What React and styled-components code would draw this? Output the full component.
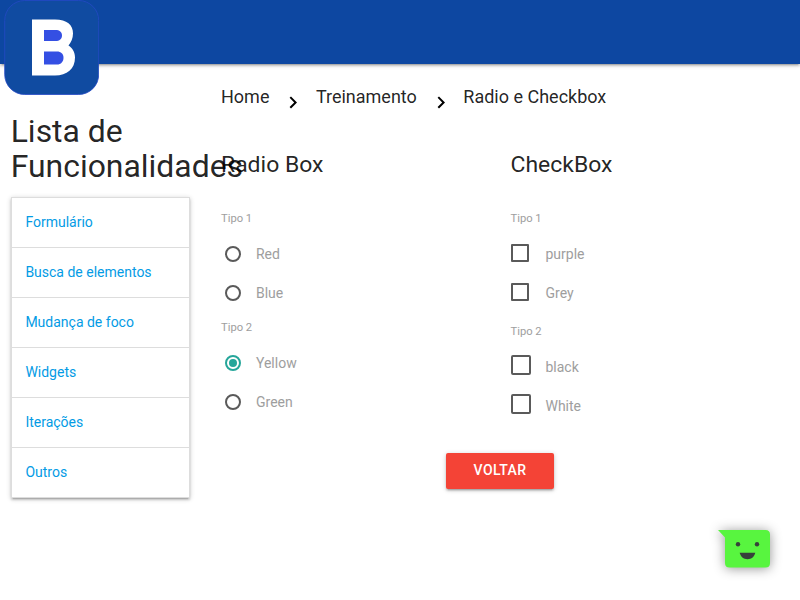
import React from "react";
import styled, { createGlobalStyle } from "styled-components";

const GlobalStyle = createGlobalStyle`
  *, *::before, *::after { box-sizing: border-box; }
  html { font-size: 14px; }
  body {
    margin: 0;
    background: #fff;
    color: rgba(0, 0, 0, 0.87);
    font-family: Roboto, "Liberation Sans", sans-serif;
    line-height: 1.5;
  }
`;

const Page = styled.div`
  position: relative;
  min-height: 600px;
  overflow: hidden;
`;

const NavBar = styled.nav`
  height: 64px;
  background: #0d47a1;
  box-shadow: 0 2px 2px 0 rgba(0, 0, 0, 0.14), 0 3px 1px -2px rgba(0, 0, 0, 0.12),
    0 1px 5px 0 rgba(0, 0, 0, 0.2);
`;

const Logo = styled.svg`
  position: absolute;
  left: 4px;
  top: 0;
`;

const Layout = styled.div`
  display: grid;
  grid-template-columns: 179px 1fr;
  column-gap: 31.3px;
  padding-left: 10.7px;
`;

const Sidebar = styled.aside`
  padding-top: 50px;
`;

const SidebarTitle = styled.h4`
  margin: 0 0 13px;
  font-size: 2.28rem;
  font-weight: 400;
  line-height: 110%;
  height: 70px;
`;

const Collection = styled.nav`
  border: 1px solid #ddd;
  border-bottom: 0;
  box-shadow: 0 2px 2px 0 rgba(0, 0, 0, 0.14), 0 3px 1px -2px rgba(0, 0, 0, 0.12),
    0 1px 5px 0 rgba(0, 0, 0, 0.2);
`;

const CollectionLink = styled.a`
  display: flex;
  align-items: center;
  height: 50px;
  padding: 0 13.7px;
  border-bottom: 1px solid #ddd;
  color: #039be5;
  text-decoration: none;
`;

const Content = styled.main`
  padding-top: 19px;
`;

const Breadcrumbs = styled.div`
  display: flex;
  height: 28px;
  font-size: 18px;
  line-height: 28px;
`;

const Chevron = styled.svg`
  width: 24px;
  height: 24px;
  margin: 7px 10.7px 0 11.8px;
  flex: none;
`;

const Columns = styled.div`
  display: grid;
  grid-template-columns: 289.5px 1fr;
  margin-top: 41px;
`;

const ColumnTitle = styled.h5`
  margin: 0 0 32px;
  font-size: 1.64rem;
  font-weight: 400;
  line-height: 26px;
`;

const Group = styled.div`
  padding-bottom: ${(p) => p.$gap || 0}px;
  color: #9e9e9e;
`;

const GroupLabel = styled.div`
  height: 18px;
  font-size: 0.8rem;
  line-height: 18px;
  margin-bottom: 7px;
`;

const Option = styled.label`
  display: flex;
  align-items: center;
  height: 39px;
`;

const ControlSlot = styled.span`
  display: flex;
  width: 35px;
  padding-left: ${(p) => p.$indent || 0}px;
`;

const RadioMark = styled.span`
  display: flex;
  align-items: center;
  justify-content: center;
  width: 16px;
  height: 16px;
  margin-bottom: 2px;
  border: 2px solid ${(p) => (p.$checked ? "#26a69a" : "#5a5a5a")};
  border-radius: 50%;

  &::after {
    content: "";
    width: 8px;
    height: 8px;
    border-radius: 50%;
    background: ${(p) => (p.$checked ? "#26a69a" : "transparent")};
  }
`;

const CheckMark = styled.span`
  width: ${(p) => (p.$filled ? 20 : 18)}px;
  height: ${(p) => (p.$filled ? 20 : 18)}px;
  margin-bottom: ${(p) => (p.$filled ? 6 : 4)}px;
  border: 2px solid #5a5a5a;
  border-radius: ${(p) => (p.$filled ? 2 : 1)}px;
`;

const Actions = styled.div`
  padding: 27px 0 0 225px;
`;

const Button = styled.button`
  display: block;
  width: 108px;
  height: 36px;
  padding: 0 0 2px;
  border: 0;
  border-radius: 2px;
  background: #f44336;
  color: #fff;
  font-family: inherit;
  font-size: 14px;
  font-weight: 500;
  letter-spacing: 0.4px;
  line-height: 34px;
  box-shadow: 0 2px 2px 0 rgba(0, 0, 0, 0.14), 0 3px 1px -2px rgba(0, 0, 0, 0.12),
    0 1px 5px 0 rgba(0, 0, 0, 0.2);
`;

const ChatBubble = styled.svg`
  position: absolute;
  left: 700px;
  top: 510px;
  overflow: visible;
  filter: drop-shadow(0 1px 6px rgba(0, 0, 0, 0.42));
`;

const links = ["Formulário", "Busca de elementos", "Mudança de foco", "Widgets", "Iterações", "Outros"];

const radioGroups = [
  { label: "Tipo 1", gap: 6, options: ["Red", "Blue"] },
  { label: "Tipo 2", gap: 0, options: ["Yellow", "Green"], selected: "Yellow" },
];

const checkGroups = [
  { label: "Tipo 1", gap: 10, options: ["purple", "Grey"] },
  { label: "Tipo 2", gap: 0, options: ["black", "White"], filled: true },
];

const Separator = () => (
  <Chevron viewBox="0 0 24 24">
    <path d="M10 6.4 8.590 7.810 13.170 12.4 8.590 16.990 10 18.4 16 12.4Z" fill="#000" />
  </Chevron>
);

export default function App() {
  return (
    <Page>
      <GlobalStyle />
      <NavBar />
      <Logo width="95" height="95" viewBox="0 0 95 95">
        <rect x="0.7" y="0.5" width="94" height="94" rx="20" fill="#104ba1" stroke="#2449c5" strokeWidth="0.8" />
        <path
          d="M28 19.500H51C63 19.500 69 25 69 33.500C69 38.500 67 42.500 64.500 45.500C68.500 48 71 52 71 57.500C71 69 63 75.500 51 75.500H28Z"
          fill="#fff"
        />
        <path d="M40 30H51.500C55.500 30 58 32 58 35.500C58 39 55.500 41 51.500 41H40Z" fill="#344fe3" />
        <path d="M40 51.500H53C57 51.500 59.500 54 59.500 57.700C59.500 61.500 57 64.500 53 64.500H40Z" fill="#344fe3" />
      </Logo>
      <Layout>
        <Sidebar>
          <SidebarTitle>Lista de Funcionalidades</SidebarTitle>
          <Collection>
            {links.map((text) => (
              <CollectionLink key={text}>{text}</CollectionLink>
            ))}
          </Collection>
        </Sidebar>
        <Content>
          <Breadcrumbs>
            <span>Home</span>
            <Separator />
            <span>Treinamento</span>
            <Separator />
            <span>Radio e Checkbox</span>
          </Breadcrumbs>
          <Columns>
            <section>
              <ColumnTitle>Radio Box</ColumnTitle>
              {radioGroups.map((group, i) => (
                <Group key={i} $gap={group.gap}>
                  <GroupLabel>{group.label}</GroupLabel>
                  {group.options.map((name) => (
                    <Option key={name}>
                      <ControlSlot $indent={4}>
                        <RadioMark $checked={group.selected === name} />
                      </ControlSlot>
                      {name}
                    </Option>
                  ))}
                </Group>
              ))}
            </section>
            <section>
              <ColumnTitle>CheckBox</ColumnTitle>
              {checkGroups.map((group, i) => (
                <Group key={i} $gap={group.gap}>
                  <GroupLabel>{group.label}</GroupLabel>
                  {group.options.map((name) => (
                    <Option key={name}>
                      <ControlSlot $indent={0.5}>
                        <CheckMark $filled={group.filled} />
                      </ControlSlot>
                      {name}
                    </Option>
                  ))}
                </Group>
              ))}
            </section>
          </Columns>
          <Actions>
            <Button>VOLTAR</Button>
          </Actions>
        </Content>
      </Layout>
      <ChatBubble width="90" height="80" viewBox="0 0 90 80">
        <path
          d="M18 20H65.500Q70 20 70 24.500V53Q70 57.500 65.500 57.500H29.500Q25 57.500 25 53V27.500Z"
          fill="#58f53f"
        />
        <circle cx="38" cy="34.300" r="2.200" fill="#37413b" />
        <circle cx="57" cy="34.300" r="2.200" fill="#37413b" />
        <path d="M39.700 42.800H55.300C54.500 46.500 51.500 49.300 47.500 49.300S40.500 46.500 39.700 42.800Z" fill="#37413b" />
      </ChatBubble>
    </Page>
  );
}
